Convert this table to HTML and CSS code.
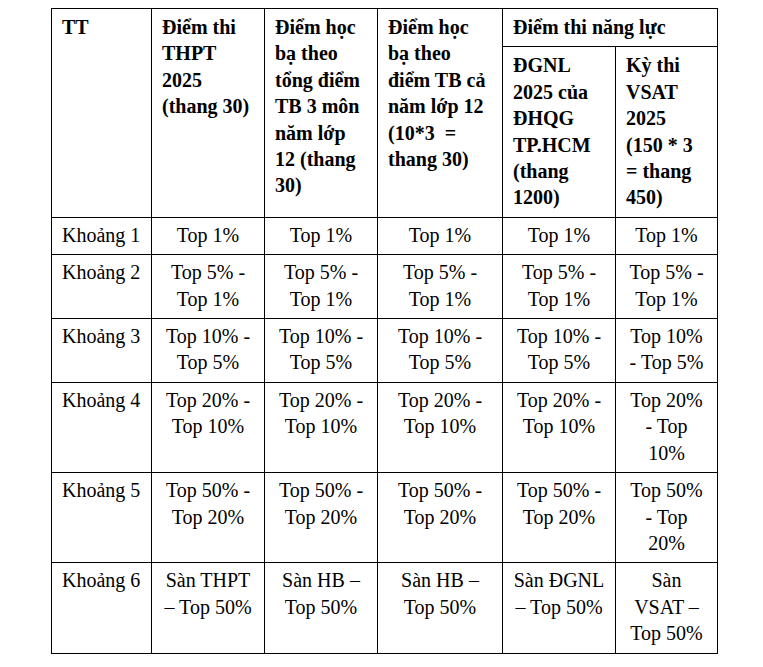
FILE: index.html
```html
<!DOCTYPE html>
<html lang="vi">
<head>
<meta charset="utf-8">
<title>Bảng quy đổi điểm</title>
<link rel="stylesheet" href="styles.css">
</head>
<body>
<table class="grid">
  <colgroup>
    <col class="c-tt">
    <col class="c-thpt">
    <col class="c-hb3">
    <col class="c-hbtb">
    <col class="c-dgnl">
    <col class="c-vsat">
  </colgroup>
  <thead>
    <tr>
      <th rowspan="2">TT</th>
      <th rowspan="2">Điểm thi THPT 2025 (thang 30)</th>
      <th rowspan="2">Điểm học bạ theo tổng điểm TB 3 môn năm lớp 12 (thang 30)</th>
      <th rowspan="2">Điểm học bạ theo điểm TB cả năm lớp 12 (10*3 &nbsp;= thang 30)</th>
      <th colspan="2">Điểm thi năng lực</th>
    </tr>
    <tr>
      <th>ĐGNL 2025 của ĐHQG TP.HCM (thang 1200)</th>
      <th>Kỳ thi VSAT 2025 (150 * 3 = thang 450)</th>
    </tr>
  </thead>
  <tbody>
    <tr>
      <td class="label">Khoảng 1</td>
      <td>Top 1%</td>
      <td>Top 1%</td>
      <td>Top 1%</td>
      <td>Top 1%</td>
      <td>Top 1%</td>
    </tr>
    <tr>
      <td class="label">Khoảng 2</td>
      <td>Top 5% - Top 1%</td>
      <td>Top 5% - Top 1%</td>
      <td>Top 5% - Top 1%</td>
      <td>Top 5% - Top 1%</td>
      <td>Top 5% - Top 1%</td>
    </tr>
    <tr>
      <td class="label">Khoảng 3</td>
      <td>Top 10% - Top 5%</td>
      <td>Top 10% - Top 5%</td>
      <td>Top 10% - Top 5%</td>
      <td>Top 10% - Top 5%</td>
      <td>Top 10% - Top 5%</td>
    </tr>
    <tr>
      <td class="label">Khoảng 4</td>
      <td>Top 20% - Top 10%</td>
      <td>Top 20% - Top 10%</td>
      <td>Top 20% - Top 10%</td>
      <td>Top 20% - Top 10%</td>
      <td>Top 20% - Top 10%</td>
    </tr>
    <tr>
      <td class="label">Khoảng 5</td>
      <td>Top 50% - Top 20%</td>
      <td>Top 50% - Top 20%</td>
      <td>Top 50% - Top 20%</td>
      <td>Top 50% - Top 20%</td>
      <td>Top 50% - Top 20%</td>
    </tr>
    <tr>
      <td class="label">Khoảng 6</td>
      <td>Sàn THPT – Top 50%</td>
      <td>Sàn HB – Top 50%</td>
      <td>Sàn HB – Top 50%</td>
      <td>Sàn ĐGNL – Top 50%</td>
      <td>Sàn VSAT – Top 50%</td>
    </tr>
  </tbody>
</table>
</body>
</html>
```

FILE: styles.css
```css
html, body {
  background: #ffffff;
}

body {
  margin: 0;
  padding: 8px 0 0 51px;
  font-family: "Liberation Serif", "Times New Roman", serif;
  font-size: 20px;
  color: #000000;
}

.grid {
  table-layout: fixed;
  width: 667px;
  border-collapse: separate;
  border-spacing: 0;
  border-top: 1px solid #000;
  border-left: 1px solid #000;
}

.c-tt { width: 100px; }
.c-thpt { width: 113px; }
.c-hb3 { width: 113px; }
.c-hbtb { width: 125px; }
.c-dgnl { width: 113px; }
.c-vsat { width: 102px; }

.grid th,
.grid td {
  border-right: 1px solid #000;
  border-bottom: 1px solid #000;
  vertical-align: top;
  line-height: 26.4px;
  padding: 4px 10px 6px 10px;
}

.grid th {
  font-weight: bold;
  text-align: left;
  padding-top: 5px;
  padding-bottom: 6px;
}

.grid td {
  font-weight: normal;
  text-align: center;
}

.grid td.label {
  text-align: left;
  white-space: nowrap;
}
```
